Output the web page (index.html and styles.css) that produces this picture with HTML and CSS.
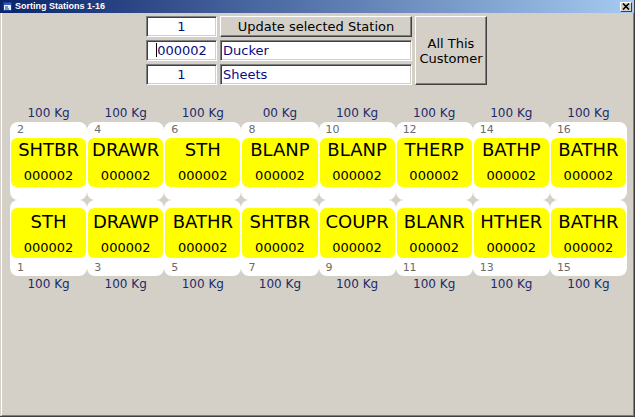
FILE: index.html
```html
<!DOCTYPE html>
<html>
<head>
<meta charset="utf-8">
<link rel="stylesheet" href="styles.css">
</head>
<body>
<div class="window">
  <div class="titlebar">
    <svg class="ticon" width="9" height="9" viewBox="0 0 9 9">
      <rect x="0.5" y="0.5" width="8" height="8" fill="#e8f0ff" stroke="#1c3c8c"/>
      <rect x="1" y="1" width="7" height="2" fill="#2a5cc8"/>
      <path d="M2 5h3M2 7h4" stroke="#1c3c8c" stroke-width="1"/>
    </svg>
    <span class="title">Sorting Stations 1-16</span>
    <div class="close">
      <svg width="8" height="7" viewBox="0 0 8 7"><path d="M1 0.5L7 6.5M7 0.5L1 6.5" stroke="#000" stroke-width="1.6"/></svg>
    </div>
  </div>
  <div class="client">
    <div class="form">
      <div class="tb num">1</div>
      <div class="btn upd">Update selected Station</div>
      <div class="btn all">All This<br>Customer</div>
      <div class="tb num"><span class="caret"></span>000002</div>
      <div class="tb txt">Ducker</div>
      <div class="tb num">1</div>
      <div class="tb txt">Sheets</div>
    </div>
    <div class="stations">
      <div class="kg">100 Kg</div>
      <div class="kg">100 Kg</div>
      <div class="kg">100 Kg</div>
      <div class="kg">00 Kg</div>
      <div class="kg">100 Kg</div>
      <div class="kg">100 Kg</div>
      <div class="kg">100 Kg</div>
      <div class="kg">100 Kg</div>

      <div class="card top"><div class="no">2</div><div class="y"><div class="code">SHTBR</div><div class="id">000002</div></div></div>
      <div class="card top"><div class="no">4</div><div class="y"><div class="code">DRAWR</div><div class="id">000002</div></div></div>
      <div class="card top"><div class="no">6</div><div class="y"><div class="code">STH</div><div class="id">000002</div></div></div>
      <div class="card top"><div class="no">8</div><div class="y"><div class="code">BLANP</div><div class="id">000002</div></div></div>
      <div class="card top"><div class="no">10</div><div class="y"><div class="code">BLANP</div><div class="id">000002</div></div></div>
      <div class="card top"><div class="no">12</div><div class="y"><div class="code">THERP</div><div class="id">000002</div></div></div>
      <div class="card top"><div class="no">14</div><div class="y"><div class="code">BATHP</div><div class="id">000002</div></div></div>
      <div class="card top"><div class="no">16</div><div class="y"><div class="code">BATHR</div><div class="id">000002</div></div></div>

      <div class="card bot"><div class="y"><div class="code">STH</div><div class="id">000002</div></div><div class="no">1</div></div>
      <div class="card bot"><div class="y"><div class="code">DRAWP</div><div class="id">000002</div></div><div class="no">3</div></div>
      <div class="card bot"><div class="y"><div class="code">BATHR</div><div class="id">000002</div></div><div class="no">5</div></div>
      <div class="card bot"><div class="y"><div class="code">SHTBR</div><div class="id">000002</div></div><div class="no">7</div></div>
      <div class="card bot"><div class="y"><div class="code">COUPR</div><div class="id">000002</div></div><div class="no">9</div></div>
      <div class="card bot"><div class="y"><div class="code">BLANR</div><div class="id">000002</div></div><div class="no">11</div></div>
      <div class="card bot"><div class="y"><div class="code">HTHER</div><div class="id">000002</div></div><div class="no">13</div></div>
      <div class="card bot"><div class="y"><div class="code">BATHR</div><div class="id">000002</div></div><div class="no">15</div></div>

      <div class="kg kgb">100 Kg</div>
      <div class="kg kgb">100 Kg</div>
      <div class="kg kgb">100 Kg</div>
      <div class="kg kgb">100 Kg</div>
      <div class="kg kgb">100 Kg</div>
      <div class="kg kgb">100 Kg</div>
      <div class="kg kgb">100 Kg</div>
      <div class="kg kgb">100 Kg</div>
    </div>
  </div>
</div>
</body>
</html>
```
FILE: styles.css
```css
body {
  margin: 0;
  background: #d4d0c8;
  font-family: "DejaVu Sans", sans-serif;
}
.window {
  width: 635px;
  height: 417px;
  box-sizing: border-box;
  display: flex;
  flex-direction: column;
  background: #d4d0c8;
  border-right: 1px solid #404040;
  border-bottom: 1px solid #404040;
}
.titlebar {
  height: 13px;
  flex: none;
  display: flex;
  align-items: center;
  padding-left: 3px;
  background: linear-gradient(to right, #0a246a, #a6caf0);
}
.ticon {
  flex: none;
  margin-right: 3px;
}
.title {
  flex: 1;
  color: #fff;
  font: bold 9px "Liberation Sans", sans-serif;
  line-height: 13px;
}
.close {
  width: 12px;
  height: 10px;
  box-sizing: border-box;
  margin-right: 2px;
  background: #d4d0c8;
  border: 1px solid;
  border-color: #fff #404040 #404040 #fff;
  display: flex;
  align-items: center;
  justify-content: center;
}
.client {
  flex: 1;
  margin-left: 1px;
  border-left: 1px solid #fff;
  border-right: 1px solid #808080;
  border-bottom: 1px solid #808080;
}
.form {
  display: grid;
  grid-template-columns: 71px 192px 72px;
  grid-template-rows: 21px 21px 21px;
  gap: 3px;
  margin: 3px 0 0 144px;
  width: max-content;
  font-size: 13px;
}
.tb {
  box-sizing: border-box;
  background: #fff;
  border: 1px solid;
  border-color: #808080 #fff #fff #808080;
  box-shadow: inset 1px 1px #404040, inset -1px -1px #d4d0c8;
  color: #0a0a80;
  line-height: 19px;
  white-space: nowrap;
}
.num {
  text-align: center;
}
.txt {
  padding-left: 2px;
}
.caret {
  display: inline-block;
  width: 1px;
  height: 14px;
  background: #000;
  vertical-align: -2px;
}
.btn {
  box-sizing: border-box;
  background: #d4d0c8;
  border: 1px solid;
  border-color: #fff #404040 #404040 #fff;
  box-shadow: inset -1px -1px #808080;
  color: #000;
  display: flex;
  align-items: center;
  justify-content: center;
  text-align: center;
}
.all {
  grid-column: 3;
  grid-row: 1 / 4;
  line-height: 15px;
}
.stations {
  display: grid;
  grid-template-columns: repeat(8, 1fr);
  width: 617px;
  margin: 20px 0 0 8px;
}
.kg {
  height: 17px;
  line-height: 17px;
  text-align: center;
  font-size: 12px;
  color: #1b2a6b;
}
.kgb {
  line-height: 16px;
}
.card {
  background: #fff;
  border-radius: 8px;
  display: flex;
  flex-direction: column;
}
.card.top {
  height: 78px;
}
.card.bot {
  height: 76px;
}
.no {
  height: 16px;
  padding-left: 7px;
  font-size: 11px;
  line-height: 16px;
  color: #6b6b6b;
}
.bot .no {
  padding-top: 2px;
}
.y {
  box-sizing: border-box;
  height: 49px;
  margin: 0 1px;
  background: #ff0;
  border-radius: 6px;
  text-align: center;
  color: #000;
}
.bot .y {
  height: 50px;
  margin-top: 8px;
  padding-top: 2px;
}
.code {
  font-size: 18px;
  line-height: 24px;
}
.id {
  margin-top: 5px;
  font-size: 13px;
  line-height: 18px;
}
```
